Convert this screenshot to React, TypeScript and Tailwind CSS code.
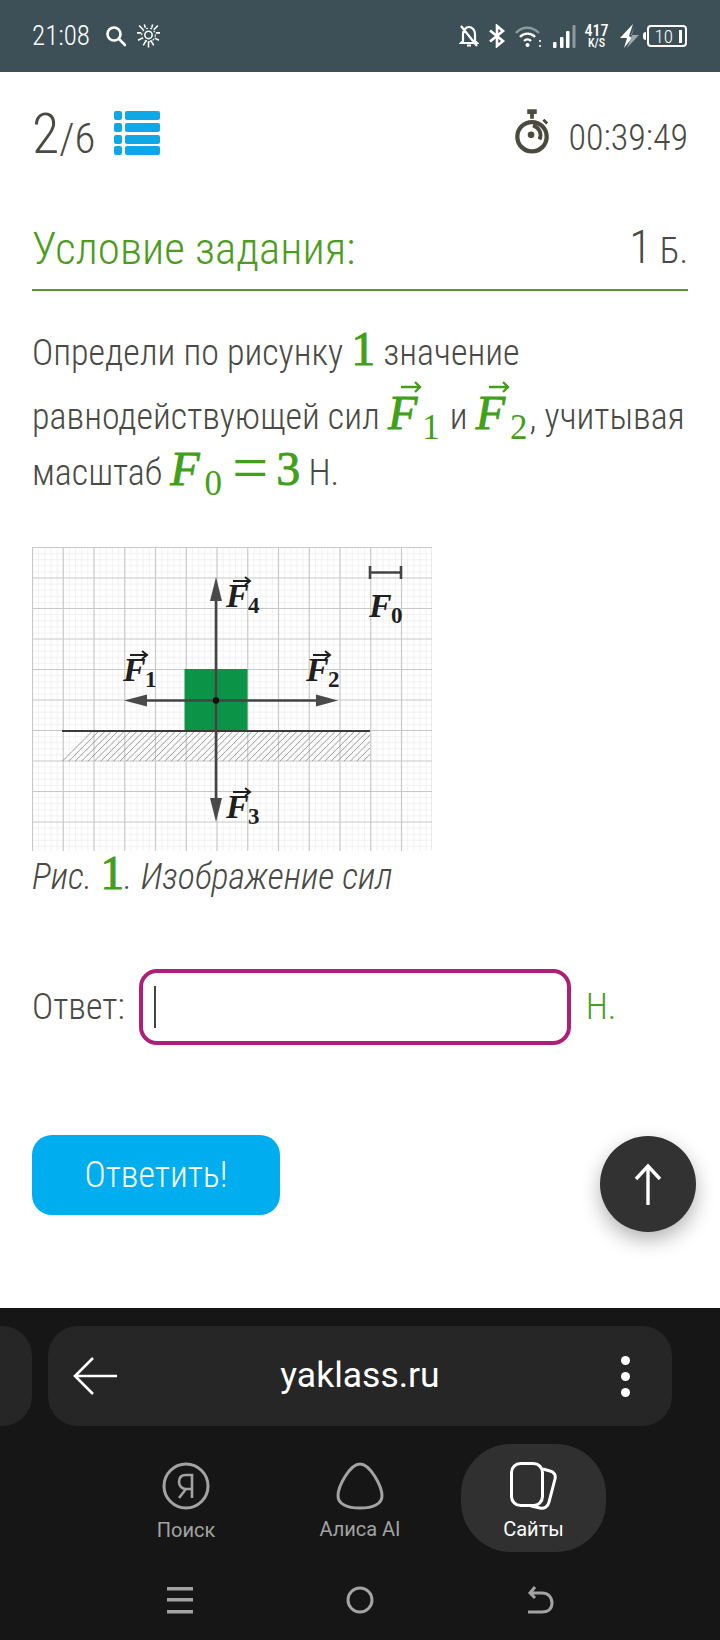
import React from "react";

const grid = () => {
  const minor: React.ReactNode[] = [];
  const major: React.ReactNode[] = [];
  const sx = 30.75, sy = 30.5, w = 400, h = 304;
  for (let i = 0; i * sx / 5 <= w; i++) {
    const x = 0.5 + i * sx / 5;
    if (i % 5 === 0) major.push(<line key={"vM" + i} x1={x} x2={x} y1={0} y2={h} stroke="#c8c8c8" strokeWidth="1.2" />);
    else minor.push(<line key={"v" + i} x1={x} x2={x} y1={0} y2={h} stroke="#ececec" strokeWidth="0.7" />);
  }
  for (let i = 0; i * sy / 5 <= h; i++) {
    const y = 0.5 + i * sy / 5;
    if (i % 5 === 0) major.push(<line key={"hM" + i} x1={0} x2={w} y1={y} y2={y} stroke="#c8c8c8" strokeWidth="1.2" />);
    else minor.push(<line key={"h" + i} x1={0} x2={w} y1={y} y2={y} stroke="#ececec" strokeWidth="0.7" />);
  }
  return [...minor, ...major];
};

function Label({ x, y, sub }: { x: number; y: number; sub: string }) {
  return (
    <g>
      <text x={x} y={y} fontFamily="'Liberation Serif', serif" fontWeight="700" fontStyle="italic" fontSize="34" fill="#1f1f1f">F</text>
      <path d={`M${x + 7} ${y - 26}H${x + 23}M${x + 19} ${y - 30}L${x + 24} ${y - 26}L${x + 19} ${y - 22}`} stroke="#1f1f1f" strokeWidth="2" fill="none" />
      <text x={x + 22} y={y + 6} fontFamily="'Liberation Serif', serif" fontWeight="700" fontSize="23" fill="#1f1f1f">{sub}</text>
    </g>
  );
}

function Figure() {
  const hatch: React.ReactNode[] = [];
  for (let x = 30; x < 370; x += 6.4) {
    hatch.push(<line key={x} x1={x} y1={214.5} x2={x + 30} y2={184.5} stroke="#808080" strokeWidth="0.8" />);
  }
  return (
    <svg width="400" height="304" viewBox="0 0 400 304" className="block">
      {grid()}
      <defs>
        <clipPath id="hc"><rect x="30" y="184" width="308" height="30.5" /></clipPath>
      </defs>
      <g clipPath="url(#hc)">{hatch}</g>
      <rect x="152.5" y="122" width="63" height="62" fill="#0b9347" />
      <line x1="30" x2="338" y1="184" y2="184" stroke="#3a3a3a" strokeWidth="1.8" />
      <line x1="184" x2="184" y1="45" y2="262" stroke="#444" strokeWidth="2.6" />
      <line x1="110" x2="285" y1="153.5" y2="153.5" stroke="#444" strokeWidth="2.6" />
      <path d="M184 30L190 54H178Z" fill="#4a4a4a" />
      <path d="M184 275L190 251H178Z" fill="#4a4a4a" />
      <path d="M92 153.5L115 147.5V159.5Z" fill="#4a4a4a" />
      <path d="M306 153.5L284 147.5V159.5Z" fill="#4a4a4a" />
      <circle cx="184" cy="153.5" r="3.2" fill="#111" />
      <path d="M338 25.5H369M338 19V32M369 19V32" stroke="#444" strokeWidth="2.6" fill="none" />
      <Label x={194} y={60} sub="4" />
      <Label x={91} y={134} sub="1" />
      <Label x={274} y={134} sub="2" />
      <Label x={194} y={271} sub="3" />
      <text x={337} y={70} fontFamily="'Liberation Serif', serif" fontWeight="700" fontStyle="italic" fontSize="34" fill="#1f1f1f">F</text>
      <text x={359} y={76} fontFamily="'Liberation Serif', serif" fontWeight="700" fontSize="23" fill="#1f1f1f">0</text>
    </svg>
  );
}

function MathF({ sub, arrow }: { sub: string; arrow?: boolean }) {
  return (
    <span className="relative inline-block pr-[2px] font-['Liberation_Serif'] font-normal text-[#419f1a] [font-stretch:100%]">
      <span className="text-[48px] italic leading-none [-webkit-text-stroke:0.9px_#419f1a]">F</span>
      <span className="relative top-[10px] ml-[5px] text-[35px] leading-none">{sub}</span>
      {arrow && (
        <svg width="22" height="12" viewBox="0 0 22 12" className="absolute left-[12px] top-[-8px]">
          <path d="M1 6H20M15 1L20 6L15 11" stroke="#419f1a" strokeWidth="2.4" fill="none" />
        </svg>
      )}
    </span>
  );
}

const Num = ({ children }: { children: React.ReactNode }) => (
  <span className="font-['Liberation_Serif'] text-[48px] font-normal not-italic leading-none text-[#419f1a] [-webkit-text-stroke:0.9px_#419f1a] [font-stretch:100%]">{children}</span>
);

function StatusBar() {
  return (
    <div className="flex h-[72px] shrink-0 items-center justify-between bg-[#3d5058] pl-8 pr-[33px] text-white">
      <div className="flex items-center">
        <span className="text-[27px] leading-none">21:08</span>
        <svg width="21" height="22" viewBox="0 0 21 22" className="ml-[15px]" fill="none" stroke="#fff" strokeWidth="2.6">
          <circle cx="9" cy="9" r="6.5" />
          <path d="M14 14L20 20" strokeLinecap="round" />
        </svg>
        <svg width="23" height="24" viewBox="0 0 22 22" className="ml-[11px]" fill="none" stroke="#fff" strokeWidth="1.5">
          <circle cx="11" cy="10" r="3.5" />
          <circle cx="11" cy="10" r="6.5" strokeWidth="1" strokeDasharray="2 2" />
          <path d="M2 1L6 5M20 1L16 5M0 8H4M22 8H18M1 15L5 13M21 15L17 13M6 20L9 15M16 20L13 15M11 22V16M7 0L8 3M15 0L14 3" />
        </svg>
      </div>
      <div className="flex items-center">
        <svg width="20" height="24" viewBox="0 0 20 24" fill="none" stroke="#fff" strokeWidth="2.2">
          <path d="M4 17V10C4 6 7 3 10 3S16 6 16 10V17L18 19H2ZM8 21.5H12M2 2L18 22" />
        </svg>
        <svg width="18" height="24" viewBox="0 0 18 24" className="ml-[9px]" fill="none" stroke="#fff" strokeWidth="2.6">
          <path d="M2 6.5L15 17L9 22V2L15 7L2 17.5" />
        </svg>
        <svg width="29" height="24" viewBox="0 0 29 24" className="ml-[8px]" fill="none">
          <path d="M2 9C8 2 18 2 25 9" stroke="#8d9a9f" strokeWidth="2.4" />
          <path d="M6 13C10 8.5 17 8.5 21 13" stroke="#fff" strokeWidth="2.4" />
          <path d="M10 17C12 15 15 15 17 17" stroke="#fff" strokeWidth="2.4" />
          <circle cx="13.5" cy="21" r="2" fill="#fff" />
          <path d="M26 16V18M26 21V23" stroke="#fff" strokeWidth="1.6" />
        </svg>
        <svg width="23" height="23" viewBox="0 0 23 23" className="ml-[10px]">
          <rect x="0" y="17" width="3.5" height="6" rx="1" fill="#fff" />
          <rect x="7" y="12" width="3.5" height="11" rx="1" fill="#fff" />
          <rect x="13" y="6" width="3.5" height="17" rx="1" fill="#fff" />
          <rect x="19.5" y="0" width="3" height="23" rx="1" fill="#8d9a9f" />
        </svg>
        <div className="ml-[9px] flex w-[23px] flex-col items-center font-medium leading-none">
          <span className="text-[16px] leading-[14px]">417</span>
          <span className="text-[12px] leading-[10px]">K/S</span>
        </div>
        <svg width="19" height="24" viewBox="0 0 19 24" className="ml-[12px]">
          <path d="M13 0L0 14H7L4 24L12 14L9 12Z" fill="#fff" />
          <path d="M14 3L11 11H19L7 24L11 14Z" fill="#9aa6ab" />
        </svg>
        <div className="ml-[4px] mr-[1px] h-[8px] w-[3px] rounded-l-sm bg-white" />
        <div className="flex h-[22px] w-[40px] items-center justify-end rounded-[4px] border-2 border-white pr-[3px]">
          <span className="mr-[6px] text-[19px] font-light leading-none">10</span>
          <span className="h-[13px] w-[3px] bg-white" />
        </div>
      </div>
    </div>
  );
}

function Browser() {
  return (
    <div className="flex h-[332px] shrink-0 flex-col bg-[#161616] font-['Roboto'] font-normal [font-stretch:100%]">
      <div className="mt-[18px] flex gap-4">
        <div className="h-[100px] w-8 rounded-r-[30px] bg-[#262626]" />
        <div className="flex h-[100px] w-[624px] items-center rounded-[30px] bg-[#262626] px-[25px] text-white">
          <svg width="44" height="38" viewBox="0 0 44 38" fill="none" stroke="#fff" strokeWidth="2.6">
            <path d="M44 19H2M20 1L2 19L20 37" />
          </svg>
          <span className="flex-1 text-center text-[35.5px] leading-none">yaklass.ru</span>
          <div className="flex w-[44px] flex-col items-center gap-[7px]">
            <span className="size-[9px] rounded-full bg-white" />
            <span className="size-[9px] rounded-full bg-white" />
            <span className="size-[9px] rounded-full bg-white" />
          </div>
        </div>
      </div>
      <div className="mt-[18px] flex h-[108px] pl-[113px]">
        <div className="flex w-[146px] flex-col items-center pt-[18px] text-[#a3a3a3]">
          <svg width="48" height="48" viewBox="0 0 48 48" fill="none" stroke="#a3a3a3" strokeWidth="3">
            <circle cx="24" cy="24" r="22" />
            <path d="M30 36V13H24C19 13 17 16 17 20S20 27 24 27H30M24 27L17 36" strokeWidth="2.6" />
          </svg>
          <span className="mt-[10px] text-[20px] leading-none">Поиск</span>
        </div>
        <div className="ml-[28px] flex w-[146px] flex-col items-center pt-[18px] text-[#a3a3a3]">
          <svg width="48" height="48" viewBox="0 0 48 48" fill="none" stroke="#a3a3a3" strokeWidth="3">
            <path d="M24 2C14 2 2 24 2 34C2 42 11 46 24 46S46 42 46 34C46 24 34 2 24 2Z" />
          </svg>
          <span className="mt-[9px] text-[20px] leading-none">Алиса AI</span>
        </div>
        <div className="ml-[28px] flex h-[108px] w-[145px] flex-col items-center rounded-[50px] bg-[#303030] pt-[18px] text-white">
          <svg width="48" height="48" viewBox="0 0 48 48" fill="none" stroke="#fff" strokeWidth="3">
            <rect x="1.5" y="1.5" width="31" height="42" rx="9" />
            <path d="M33 7L40 9C44 10 46 13 45 17L39 40C38 45 34 47 30 46L21 44" />
          </svg>
          <span className="mt-[9px] text-[20px] leading-none">Сайты</span>
        </div>
      </div>
      <div className="mt-[34px] flex justify-center gap-[152px]">
        <svg width="28" height="28" viewBox="0 0 28 28" fill="#a3a3a3">
          <rect x="1" y="1" width="26" height="3.5" />
          <rect x="1" y="12" width="26" height="3.5" />
          <rect x="1" y="24" width="26" height="3.5" />
        </svg>
        <svg width="28" height="28" viewBox="0 0 28 28" fill="none" stroke="#a3a3a3" strokeWidth="3">
          <circle cx="14" cy="14" r="12" />
        </svg>
        <svg width="28" height="28" viewBox="0 0 28 28" fill="none" stroke="#a3a3a3" strokeWidth="3">
          <path d="M5 7H16C22 7 26 11 26 17S22 26 16 26H2M9 1L4 7L9 12" />
        </svg>
      </div>
    </div>
  );
}

export default function App() {
  return (
    <div className="relative flex h-[1640px] w-[720px] flex-col overflow-hidden bg-white font-['Roboto',sans-serif] font-light text-[#4a4a44] [font-stretch:75%]">
      <StatusBar />
      <main className="flex flex-1 flex-col px-8">
        <div className="mt-[34px] flex items-center justify-between">
          <div className="flex items-center">
            <div className="flex items-baseline">
              <span className="text-[56px] leading-[56px]">2</span>
              <span className="text-[43px] leading-none">/6</span>
            </div>
            <svg width="46" height="44" viewBox="0 0 46 44" className="ml-[19px] mb-[2px]" fill="#0ea8e6">
              <rect x="0" y="0" width="8" height="9" rx="2" />
              <rect x="11" y="0" width="35" height="9" rx="2" />
              <rect x="0" y="12" width="8" height="9" rx="2" />
              <rect x="11" y="12" width="35" height="9" rx="2" />
              <rect x="0" y="24" width="8" height="9" rx="2" />
              <rect x="11" y="24" width="35" height="9" rx="2" />
              <rect x="0" y="35" width="8" height="9" rx="2" />
              <rect x="11" y="35" width="35" height="9" rx="2" />
            </svg>
          </div>
          <div className="flex items-center">
            <svg width="36" height="48" viewBox="0 0 38 48" fill="none" className="mb-[4px]">
              <rect x="14" y="0" width="10" height="5" fill="#4a4a3f" />
              <rect x="17" y="5" width="4" height="5" fill="#4a4a3f" />
              <circle cx="19" cy="29" r="15.5" stroke="#4a4a3f" strokeWidth="4.5" />
              <circle cx="18" cy="27" r="3.5" fill="#4a4a3f" />
              <path d="M20 17C26 19 30 25 27 32" stroke="#4a4a3f" strokeWidth="4" />
              <path d="M31 11L35 15" stroke="#4a4a3f" strokeWidth="3" />
            </svg>
            <span className="ml-[18px] mt-[8px] text-[36px] leading-none">00:39:49</span>
          </div>
        </div>
        <div className="mt-[59px] flex items-center justify-between border-b-2 border-[#55982f] pb-[12px]">
          <span className="text-[45px] leading-[52px] text-[#4d9c22]">Условие задания:</span>
          <span className="text-[36px] leading-[52px]"><span className="text-[46px]">1</span> Б.</span>
        </div>
        <div className="mt-[26px] text-[36px] leading-[53px]">
          <div className="leading-[72px]">Определи по рисунку <Num>1</Num> значение</div>
          <div className="leading-[56px]">равнодействующей сил <MathF sub="1" arrow /> и <MathF sub="2" arrow />, учитывая</div>
          <div>масштаб <MathF sub="0" /> <span className="relative top-[4px] font-['Liberation_Serif'] text-[64px] leading-[0] text-[#419f1a] [font-stretch:100%]">=</span> <Num>3</Num> <span className="text-[#4a4a44]">Н.</span></div>
        </div>
        <div className="mt-[47px]"><Figure /></div>
        <div className="-mt-[2px] text-[36px] italic leading-[44px]">
          Рис. <Num>1</Num>. Изображение сил
        </div>
        <div className="mt-[70px] flex items-center">
          <span className="text-[36px] leading-none">Ответ:</span>
          <div className="ml-[14px] flex h-[76px] w-[432px] items-center rounded-[18px] border-4 border-[#b01e77] pl-[11px]">
            <span className="h-[42px] w-[2px] bg-[#444]" />
          </div>
          <span className="ml-[15px] text-[36px] leading-none text-[#4d9c22]">Н.</span>
        </div>
        <button className="mt-[90px] h-[80px] w-[248px] rounded-[20px] bg-[#00aeef] text-[36px] leading-none text-white">Ответить!</button>
      </main>
      <div className="absolute left-[600px] top-[1136px] flex size-[96px] items-center justify-center rounded-full bg-[#323232] shadow-[0_8px_20px_rgba(0,0,0,0.3)]">
        <svg width="28" height="42" viewBox="0 0 28 42" fill="none" stroke="#fff" strokeWidth="3.4">
          <path d="M14 42V2M2 16L14 3L26 16" />
        </svg>
      </div>
      <Browser />
    </div>
  );
}
